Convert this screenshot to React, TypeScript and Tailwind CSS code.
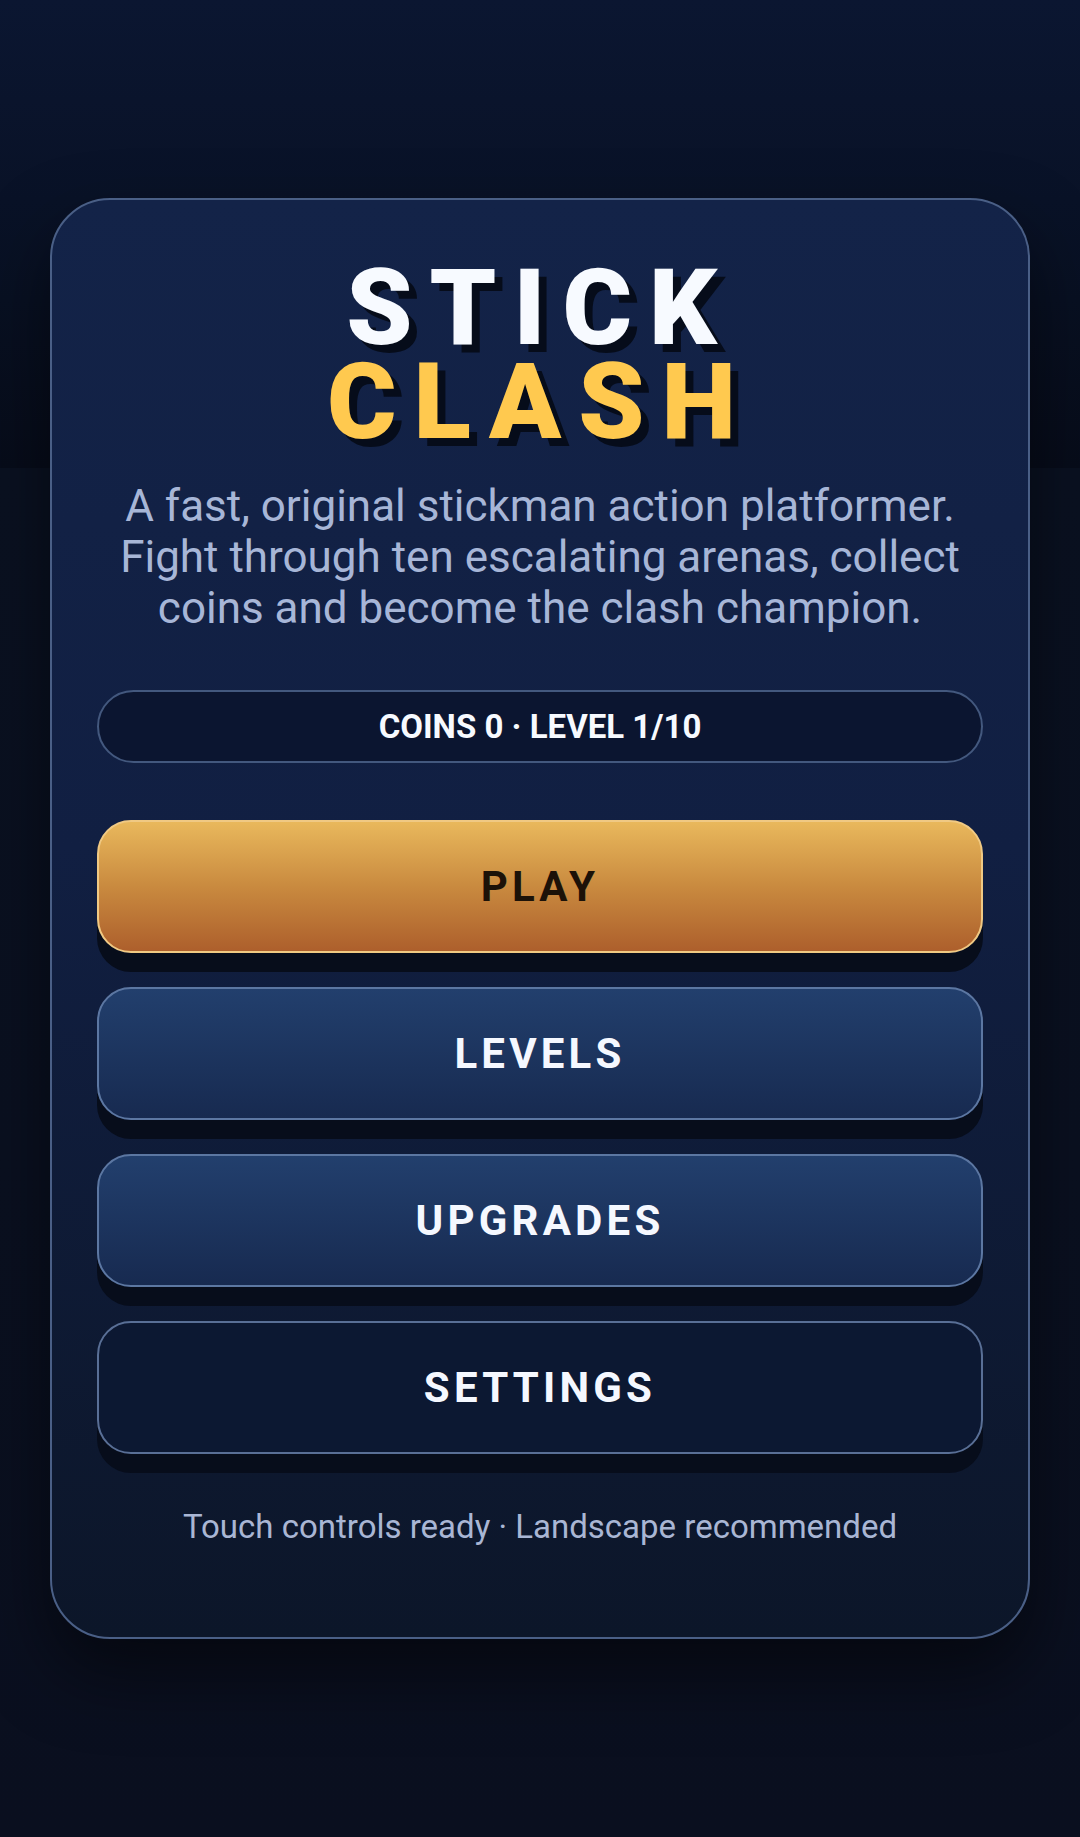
import React from "react";

// Menu entries shown under the stats pill
type MenuVariant = "primary" | "blue" | "dark";

interface MenuItem {
  label: string;
  variant: MenuVariant;
}

const menuItems: MenuItem[] = [
  { label: "PLAY", variant: "primary" },
  { label: "LEVELS", variant: "blue" },
  { label: "UPGRADES", variant: "blue" },
  { label: "SETTINGS", variant: "dark" },
];

const variantClasses: Record<MenuVariant, string> = {
  primary:
    "bg-[linear-gradient(180deg,#e9b85c_0%,#c98a3f_50%,#ad5f2c_100%)] border-[#f0c983] text-[#1c1208]",
  blue: "bg-[linear-gradient(180deg,#223f6d_0%,#172a50_100%)] border-[#5c77a2] text-[#f5f8ff]",
  dark: "bg-[#0c1832] border-[#596f96] text-[#f5f8ff]",
};

const MenuButton: React.FC<MenuItem> = ({ label, variant }) => (
  <button
    className={`flex h-[133px] w-full items-center justify-center rounded-[34px] border-2 text-[42px] font-bold tracking-[0.1em] shadow-[0_19px_0_#070d1b] ${variantClasses[variant]}`}
  >
    {label}
  </button>
);

export default function App() {
  return (
    <div className="flex min-h-screen items-center justify-center px-[50px] py-[40px] font-['Roboto','Liberation_Sans',sans-serif] [background:linear-gradient(180deg,#0b1631_0px,#081022_300px,#070c1a_468px,#0a1121_468px,#0a0f1f_1837px)]">
      <main className="flex w-full flex-col items-center rounded-[60px] border-2 border-[#4a5f86] bg-[linear-gradient(180deg,#132348_0%,#111f42_45%,#0c1629_100%)] px-[45px] pb-[88px] pt-[61px] shadow-[0_34px_70px_rgba(0,0,0,0.5)]">
        {/* Game title */}
        <h1 className="text-center text-[106px] font-black leading-[94px] tracking-[0.16em] [text-shadow:8px_8px_0_#060c1a]">
          <span className="block text-[#f7faff]">STICK</span>
          <span className="block text-[#ffc94f]">CLASH</span>
        </h1>

        <p className="mt-[32px] text-center text-[44px] leading-[51px] text-[#a7b6d7]">
          A fast, original stickman action platformer.
          <br />
          Fight through ten escalating arenas, collect
          <br />
          coins and become the clash champion.
        </p>

        {/* Progress summary */}
        <div className="mt-[56px] flex h-[73px] w-full items-center justify-center rounded-full border-2 border-[#43587e] bg-[#0b1530] text-[33px] font-bold text-[#f7faff]">
          COINS 0 · LEVEL 1/10
        </div>

        <nav className="mt-[57px] flex w-full flex-col gap-[34px]">
          {menuItems.map((item) => (
            <MenuButton key={item.label} {...item} />
          ))}
        </nav>

        <p className="mt-[50px] text-center text-[33px] leading-[45px] text-[#a9b6d4]">
          Touch controls ready · Landscape recommended
        </p>
      </main>
    </div>
  );
}
